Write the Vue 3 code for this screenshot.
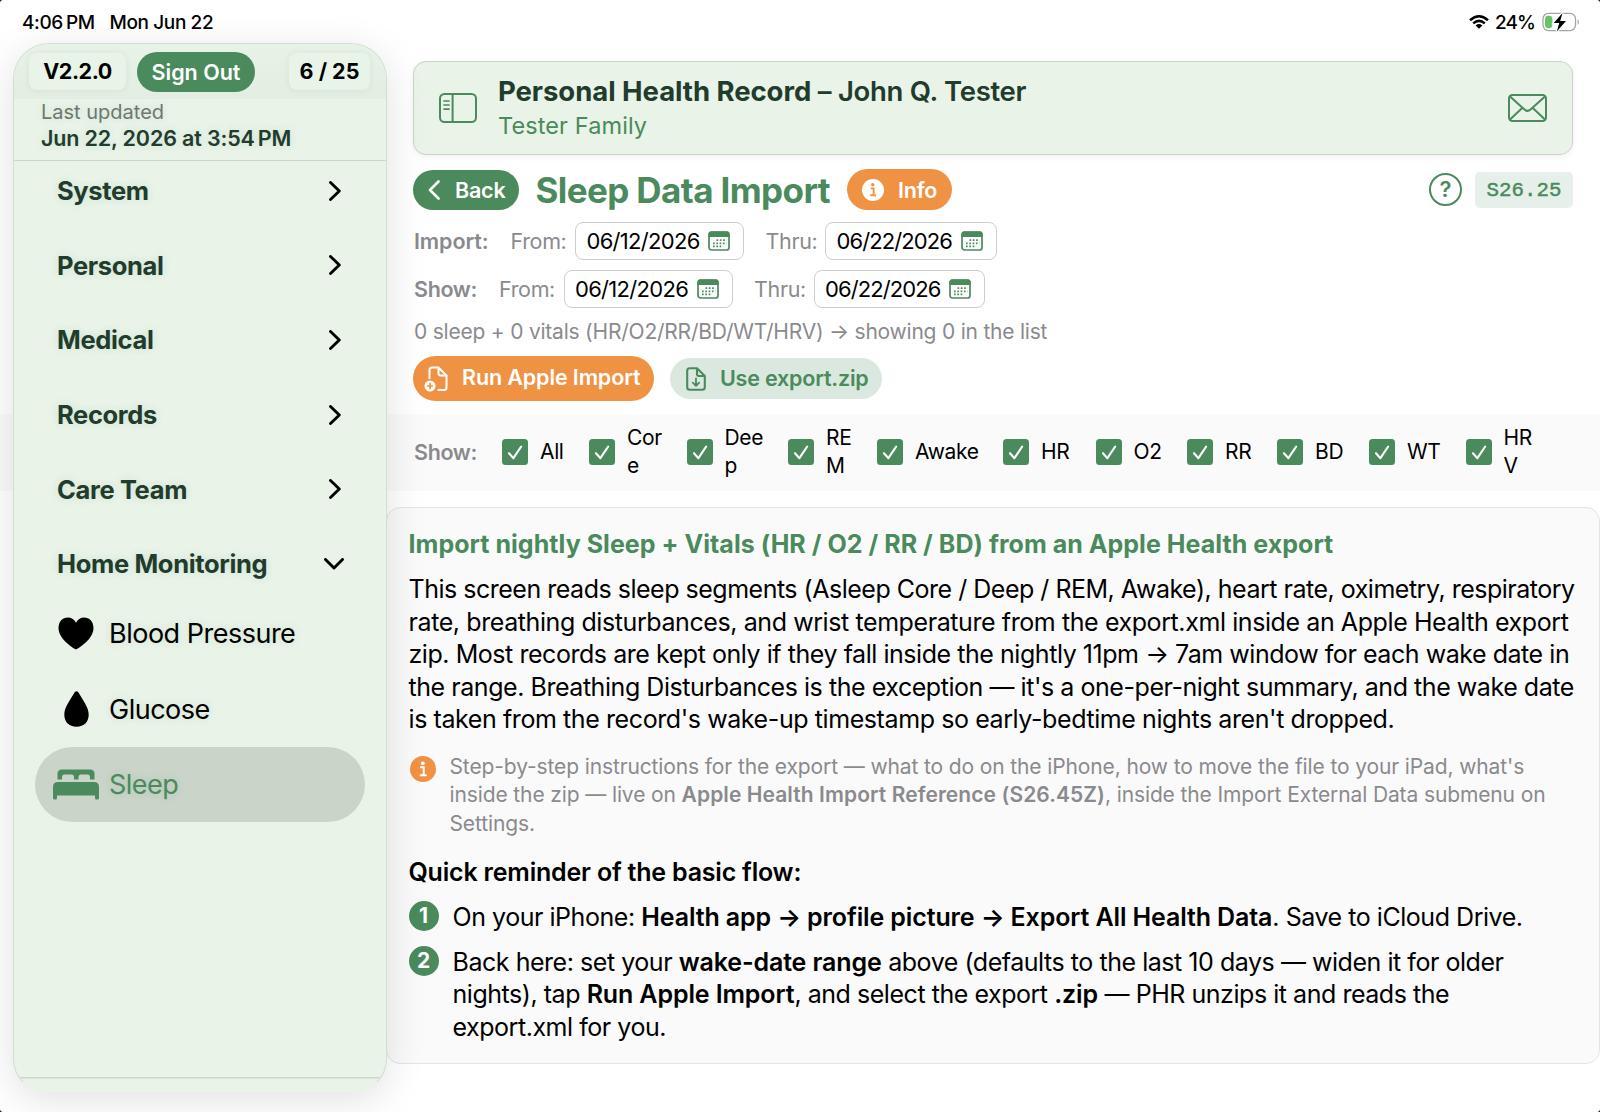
<template>
  <div class="page">
    <header class="statusbar">
      <div class="clock"><span>4:06<i class="thin"></i>PM</span><span>Mon Jun 22</span></div>
      <div class="power">
        <svg class="wifi" viewBox="0 0 20 14">
          <path d="M1 5.2Q10-2.6 19 5.2M4.2 8.4Q10 3.3 15.8 8.4" fill="none" stroke="#000" stroke-width="2.5" />
          <path d="M6.6 10.4Q10 7.7 13.4 10.4L10 13.8Z" />
        </svg>
        <span class="percent">24%</span>
        <svg class="battery" viewBox="0 0 38 20">
          <rect x="1" y="1.4" width="32.5" height="17.2" rx="5.5" fill="none" stroke="#a4a4a6" stroke-width="1.3" />
          <path d="M35.6 7q2.8 3 0 6z" fill="#a4a4a6" />
          <rect x="3" y="3.8" width="7.4" height="12.4" rx="3.4" fill="#65c466" />
          <path d="M20.5 1L11.8 11h5.4l-2.4 8.4L24 9h-5.8z" stroke="#fff" stroke-width="2.4" />
          <path d="M20.5 1L11.8 11h5.4l-2.4 8.4L24 9h-5.8z" />
        </svg>
      </div>
    </header>

    <div class="body">
      <aside class="sidebar">
        <div class="topline">
          <span class="chip version">V2.2.0</span>
          <button class="signout">Sign Out</button>
          <span class="chip count">6 / 25</span>
        </div>
        <div class="updated">
          <div class="label">Last updated</div>
          <div class="date">Jun 22, 2026 at 3:54<i class="thin"></i>PM</div>
        </div>
        <nav class="menu">
          <div v-for="item in menu" :key="item" class="group">
            <span>{{ item }}</span>
            <svg v-if="item === open" class="down" viewBox="0 0 20 12"><path d="M1.5 1.5L10 10l8.5-8.5" /></svg>
            <svg v-else class="right" viewBox="0 0 12 20"><path d="M1.5 1.5L10.3 10l-8.8 8.5" /></svg>
          </div>
          <div class="sub">
            <span class="icon">
              <svg width="36" height="33" viewBox="0 0 36 33"><path d="M18 32.5C14 30.5 .5 21.500 .5 11 .5 4.500 4.800 .5 9.800 .5 13.500 .5 16.500 2.500 18 5.800 19.500 2.500 22.500 .5 26.200 .5 31.200 .5 35.500 4.500 35.500 11 35.500 21.500 22 30.500 18 32.500Z" /></svg>
            </span>
            <span>Blood Pressure</span>
          </div>
          <div class="sub">
            <span class="icon">
              <svg width="25" height="36" viewBox="0 0 25 36"><path d="M12.5 .3C13.5 .3 14.2 1 14.8 2 18 8 24.7 16 24.7 23.5 24.7 31 20 35.7 12.5 35.7S.3 31 .3 23.5C.3 16 7 8 10.2 2 10.8 1 11.5 .3 12.5 .3Z" /></svg>
            </span>
            <span>Glucose</span>
          </div>
          <div class="sub active">
            <span class="icon">
              <svg width="46" height="31" viewBox="0 0 46 31">
                <path d="M4.5 10.5V5Q4.5 .5 9 .5H37Q41.5 .5 41.5 5V10.5H37V8Q37 5.5 34.5 5.5H28Q25.5 5.5 25.5 8V10.5H21V8Q21 5.5 18.5 5.5H11.5Q9 5.5 9 8V10.5Z" />
                <path d="M0 18Q0 13 5 13H41Q46 13 46 18V29Q46 30.5 44.5 30.5H43.5Q42 30.5 42 29V26.5H4V29Q4 30.5 2.5 30.5H1.5Q0 30.5 0 29Z" />
              </svg>
            </span>
            <span>Sleep</span>
          </div>
        </nav>
      </aside>

      <main class="main">
        <section class="record">
          <svg width="38" height="30" viewBox="0 0 38 30" class="line">
            <rect x="1" y="1" width="36" height="28" rx="4.5" />
            <path d="M13.6 1V29" />
            <path d="M5 8h5M5 12h5M5 16.2h5" stroke-width="1.7" />
          </svg>
          <div class="who">
            <div class="name"><b>Personal Health Record</b> <span>– John Q. Tester</span></div>
            <div class="family">Tester Family</div>
          </div>
          <svg width="39" height="28" viewBox="0 0 39 28" class="line">
            <rect x="1" y="1" width="37" height="26" rx="3.5" />
            <path d="M2 2.500L16.500 15.500Q19.500 18.200 22.500 15.500L37 2.500M2 25.500L14.500 13.800M37 25.500L24.500 13.800" />
          </svg>
        </section>

        <div class="titlebar">
          <button class="pill back">
            <svg width="12" height="20" viewBox="0 0 12 20"><path d="M10.5 1.5L2 10l8.5 8.5" fill="none" stroke="#fff" stroke-width="2.6" stroke-linecap="round" stroke-linejoin="round" /></svg>
            Back
          </button>
          <h1>Sleep Data Import</h1>
          <button class="pill info">
            <svg width="22" height="22" viewBox="0 0 22 22">
              <circle cx="11" cy="11" r="11" fill="#fff" />
              <circle cx="10.8" cy="5.8" r="1.7" fill="#ef9244" />
              <path d="M8.6 9.4H11.6V16M8.2 16.3H14" fill="none" stroke="#ef9244" stroke-width="1.9" />
            </svg>
            Info
          </button>
          <span class="help">?</span>
          <span class="code">S26.25</span>
        </div>

        <div v-for="row in ranges" :key="row.label" class="range">
          <b :class="row.label.toLowerCase()">{{ row.label }}:</b>
          <span class="from">From:</span>
          <div class="datebox">
            <span>{{ row.from }}</span>
            <svg class="cal" viewBox="0 0 22 20"><rect x="1" y="1" width="20" height="18" rx="2.5" fill="#fff" stroke="#4a8a5c" stroke-width="1.7" /><path d="M.5 6V3Q.5 .5 3 .5H19Q21.5 .5 21.5 3V6Z" fill="#4a8a5c" /><path d="M8.500 9.200H18.500M5 12.300H18.500M5 15.400H15" stroke="#4a8a5c" stroke-width="1.7" stroke-dasharray="1.7 1.6" /></svg>
          </div>
          <span class="thru">Thru:</span>
          <div class="datebox wide">
            <span>{{ row.thru }}</span>
            <svg class="cal" viewBox="0 0 22 20"><rect x="1" y="1" width="20" height="18" rx="2.5" fill="#fff" stroke="#4a8a5c" stroke-width="1.7" /><path d="M.5 6V3Q.5 .5 3 .5H19Q21.5 .5 21.5 3V6Z" fill="#4a8a5c" /><path d="M8.500 9.200H18.500M5 12.300H18.500M5 15.400H15" stroke="#4a8a5c" stroke-width="1.7" stroke-dasharray="1.7 1.6" /></svg>
          </div>
        </div>

        <div class="summary">0 sleep + 0 vitals (HR/O2/RR/BD/WT/HRV) → showing 0 in the list</div>

        <div class="actions">
          <button class="pill run">
            <svg width="25" height="26" viewBox="0 0 25 26" fill="none" stroke="#fff" stroke-width="2" stroke-linejoin="round">
              <path d="M5.5 13V4Q5.500 1.500 8 1.500H14.500L22.500 9.500V21.500Q22.500 24 20 24H13.500M14.500 1.500V7.500Q14.500 9.500 16.500 9.500H22.500" />
              <circle cx="6" cy="20" r="5.500" fill="#fff" stroke="none" />
              <path d="M6 16.800V23.200M2.800 20H9.200" stroke="#ef9244" stroke-width="1.7" />
            </svg>
            <span>Run Apple Import</span>
          </button>
          <button class="pill use">
            <svg width="20" height="24" viewBox="0 0 20 24" class="doc">
              <path d="M1.2 3.7Q1.2 1.2 3.7 1.2H11L18.8 9V20.3Q18.8 22.8 16.3 22.8H3.7Q1.2 22.8 1.2 20.3ZM11 1.2V7Q11 9 13 9H18.8" />
              <path d="M10 11.5V18.5M6.8 15.6L10 18.8L13.2 15.6" stroke-width="1.8" />
            </svg>
            <span>Use export.zip</span>
          </button>
        </div>

        <section class="filters">
          <b>Show:</b>
          <label v-for="f in filters" :key="f.lines.join('')" :style="{ width: f.width + 'px' }">
            <svg width="26" height="26" viewBox="0 0 26 26"><rect width="26" height="26" rx="3.5" fill="#4a8a5c" /><path d="M7 14.2L11.4 19.2L19.2 7.5" fill="none" stroke="#fff" stroke-width="2.1" stroke-linecap="round" stroke-linejoin="round" /></svg>
            <span><template v-for="(line, i) in f.lines" :key="line"><br v-if="i">{{ line }}</template></span>
          </label>
        </section>

        <section class="panel">
          <h2>Import nightly Sleep + Vitals (HR / O2 / RR / BD) from an Apple Health export</h2>
          <p class="text">
            <span class="tight">This screen reads sleep segments (Asleep Core / Deep / REM, Awake), heart rate, oximetry, respiratory</span><br>
            <span class="loose">rate, breathing disturbances, and wrist temperature from the export.xml inside an Apple Health export</span><br>
            zip. Most records are kept only if they fall inside the nightly 11pm → 7am window for each wake date in<br>
            the range. Breathing Disturbances is the exception — it's a one-per-night summary, and the wake date<br>
            <span class="loose">is taken from the record's wake-up timestamp so early-bedtime nights aren't dropped.</span>
          </p>
          <div class="note">
            <svg width="26" height="26" viewBox="0 0 26 26">
              <circle cx="13" cy="13" r="13" fill="#ef9244" />
              <circle cx="12.8" cy="7.3" r="1.9" fill="#fff" />
              <path d="M10.2 11.3H13.7V18.8M9.8 19.2H16.6" fill="none" stroke="#fff" stroke-width="2" />
            </svg>
            <p>
              Step-by-step instructions for the export — what to do on the iPhone, how to move the file to your iPad, what's<br>
              inside the zip — live on <b>Apple Health Import Reference (S26.45Z)</b>, inside the Import External Data submenu on<br>
              Settings.
            </p>
          </div>
          <h3>Quick reminder of the basic flow:</h3>
          <div class="step">
            <span class="num">1</span>
            <p>On your iPhone: <b>Health app → profile picture → Export All Health Data</b>. Save to iCloud Drive.</p>
          </div>
          <div class="step">
            <span class="num">2</span>
            <p>
              Back here: set your <b>wake-date range</b> above (defaults to the last 10 days — widen it for older<br>
              nights), tap <b>Run Apple Import</b>, and select the export <b>.zip</b> — PHR unzips it and reads the<br>
              export.xml for you.
            </p>
          </div>
        </section>
      </main>
    </div>
  </div>
</template>

<script setup>
import { ref } from 'vue'

const menu = ['System', 'Personal', 'Medical', 'Records', 'Care Team', 'Home Monitoring']
const open = ref('Home Monitoring')

const ranges = ref([
  { label: 'Import', from: '06/12/2026', thru: '06/22/2026' },
  { label: 'Show', from: '06/12/2026', thru: '06/22/2026' }
])

const filters = [
  { lines: ['All'], width: 87 },
  { lines: ['Cor', 'e'], width: 97.5 },
  { lines: ['Dee', 'p'], width: 101.5 },
  { lines: ['RE', 'M'], width: 89 },
  { lines: ['Awake'], width: 126 },
  { lines: ['HR'], width: 92.5 },
  { lines: ['O2'], width: 91.5 },
  { lines: ['RR'], width: 90 },
  { lines: ['BD'], width: 92 },
  { lines: ['WT'], width: 96.5 },
  { lines: ['HR', 'V'], width: 80 }
]
</script>

<style>
body {
  background: #000;
}
</style>

<style scoped>
.page {
  width: 1600px;
  height: 1112px;
  overflow: hidden;
  border-radius: 3px;
  background: #fff;
  color: #000;
  font-family: Inter, "Liberation Sans", sans-serif;
  white-space: nowrap;
}

h1, h2, h3, p {
  margin: 0;
}

button {
  border: 0;
  font-family: inherit;
  white-space: nowrap;
}

b {
  font-weight: 600;
}

svg {
  display: block;
  flex: none;
}

.thin {
  display: inline-block;
  width: 3px;
}

/* status bar */
.statusbar {
  display: flex;
  justify-content: space-between;
  height: 43px;
  box-sizing: border-box;
  padding: 1px 20px 0 22px;
  font-size: 19px;
  font-weight: 500;
  line-height: 43px;
}

.clock {
  display: flex;
  gap: 15px;
  letter-spacing: -0.4px;
}

.power {
  display: flex;
  align-items: center;
}

.wifi {
  width: 20px;
  height: 14px;
}

.percent {
  width: 47px;
  margin-left: 6px;
  letter-spacing: -0.9px;
}

.battery {
  width: 38px;
  height: 20px;
}

.body {
  display: flex;
}

/* sidebar */
.sidebar {
  position: relative;
  z-index: 1;
  flex: none;
  width: 374px;
  height: 1049px;
  margin-left: 13px;
  box-sizing: border-box;
  border: 1px solid #d3ddd3;
  border-bottom-color: transparent;
  border-radius: 36px 36px 33px 33px;
  background: linear-gradient(#cbd6cc, #cbd6cc) 0 1033px / 100% 1.5px no-repeat, #e9f3e8;
  box-shadow: 0 8px 40px rgba(0, 0, 0, 0.12);
}

.topline {
  display: flex;
  align-items: center;
  height: 55px;
  box-sizing: border-box;
  padding: 0 16px 0 15px;
  border-radius: 35px 35px 0 0;
  background: linear-gradient(#e8f3e8, #e3eee3);
}

.chip {
  height: 37px;
  box-sizing: border-box;
  border-radius: 8px;
  background: #e9f4e9;
  box-shadow: 0 0 7px rgba(0, 40, 10, 0.07);
  font-size: 21.5px;
  font-weight: 700;
  line-height: 37px;
  text-align: center;
}

.version {
  width: 97px;
  letter-spacing: -0.5px;
}

.signout {
  width: 118px;
  height: 40px;
  margin-left: 11px;
  padding: 0;
  border-radius: 20px;
  background: #4a8a5c;
  color: #fff;
  font-size: 21.5px;
  font-weight: 600;
}

.count {
  width: 81px;
  margin-left: auto;
}

.updated {
  height: 62px;
  box-sizing: border-box;
  padding-left: 27px;
  border-bottom: 1px solid #c9d6ca;
  color: #213b2c;
  line-height: 26px;
  text-shadow: 0 0 8px rgba(30, 110, 60, 0.13);
}

.updated .label {
  color: #6c786f;
  font-size: 20px;
}

.updated .date {
  font-size: 21.5px;
  font-weight: 600;
  letter-spacing: -0.15px;
}

.menu {
  margin-top: -7.5px;
  text-shadow: 0 0 8px rgba(30, 110, 60, 0.13);
}

.group {
  display: flex;
  align-items: center;
  justify-content: space-between;
  height: 74.6px;
  padding: 0 45px 0 43px;
  color: #213b2c;
  font-size: 25.5px;
  font-weight: 700;
  letter-spacing: -0.35px;
}

.group svg {
  fill: none;
  stroke: #000;
  stroke-width: 2.9;
  stroke-linecap: round;
  stroke-linejoin: round;
}

.right {
  width: 12px;
  height: 20px;
}

.down {
  width: 20px;
  height: 12px;
  margin-right: -3px;
}

.sub {
  display: flex;
  align-items: center;
  height: 76px;
  margin: 0 21px;
  font-size: 27px;
  letter-spacing: -0.5px;
}

.group + .sub {
  margin-top: -6px;
}

.sub .icon {
  display: flex;
  justify-content: center;
  width: 46px;
  margin: 0 10px 0 18px;
}

.active {
  height: 75px;
  border-radius: 37.5px;
  background: #cad4c9;
  color: #4a8a5c;
}

.active svg {
  fill: #4a8a5c;
}

/* main column */
.main {
  width: 1213px;
  padding-top: 18px;
}

.record {
  display: flex;
  align-items: center;
  height: 94px;
  box-sizing: border-box;
  margin: 0 27px 0 26px;
  padding: 0 25px;
  border: 1px solid #c9d3ca;
  border-radius: 13px;
  background: #e9f3e8;
  box-shadow: 0 2px 6px rgba(0, 0, 0, 0.06);
}

.line {
  fill: none;
  stroke: #4a8a5c;
  stroke-width: 2;
  stroke-linecap: round;
}

.who {
  flex: 1;
  padding-left: 21px;
}

.name {
  color: #213b2c;
  font-size: 27.5px;
  font-weight: 600;
  line-height: 35px;
  letter-spacing: -0.3px;
}

.name b {
  font-weight: 700;
  letter-spacing: -0.05px;
}

.family {
  color: #4a8a5c;
  font-size: 23.5px;
  line-height: 33px;
  letter-spacing: 0.1px;
}

.titlebar {
  display: flex;
  align-items: center;
  height: 41px;
  margin: 14px 27px 12px 26px;
}

.pill {
  display: flex;
  align-items: center;
  height: 40px;
  box-sizing: border-box;
  padding: 0;
  border-radius: 21px;
  color: #fff;
  font-size: 21.5px;
  font-weight: 600;
  letter-spacing: -0.2px;
}

.back {
  gap: 15px;
  width: 106px;
  padding-left: 15px;
  background: #4a8a5c;
}

h1 {
  width: 311px;
  padding-left: 16.5px;
  box-sizing: border-box;
  color: #4a8a5c;
  font-size: 35px;
  font-weight: 700;
  letter-spacing: -0.6px;
}

.info {
  gap: 14px;
  width: 105px;
  height: 41px;
  margin-left: 17px;
  padding-left: 15px;
  background: #ef9244;
}

.help {
  width: 33px;
  height: 33px;
  box-sizing: border-box;
  margin-left: auto;
  border: 2.3px solid #4a8a5c;
  border-radius: 50%;
  color: #4a8a5c;
  font-size: 22px;
  font-weight: 600;
  line-height: 29px;
  text-align: center;
}

.code {
  width: 98px;
  height: 36px;
  margin-left: 13px;
  border-radius: 5px;
  background: #e6efe9;
  color: #4a8a5c;
  font-family: "Liberation Mono", monospace;
  font-size: 20.8px;
  line-height: 37px;
  text-align: center;
  -webkit-text-stroke: 0.45px #4a8a5c;
}

.range {
  display: flex;
  align-items: center;
  height: 38px;
  margin: 0 27px 10px;
  color: #8a8a8e;
  font-size: 21.5px;
  letter-spacing: -0.35px;
}

.range .import {
  width: 96.5px;
  letter-spacing: -0.1px;
}

.range .show {
  width: 85px;
}

.from {
  width: 64.5px;
}

.thru {
  width: 59.5px;
  margin-left: 21.5px;
}

.datebox {
  display: flex;
  align-items: center;
  justify-content: space-between;
  width: 169px;
  height: 38px;
  box-sizing: border-box;
  padding: 0 13px 0 10.5px;
  border: 1.5px solid #cdcdd0;
  border-radius: 8px;
  background: #fff;
  color: #000;
  font-size: 22px;
  letter-spacing: -0.7px;
}

.datebox.wide {
  width: 171.5px;
  letter-spacing: -0.9px;
}

.cal {
  width: 22px;
  height: 20px;
}

.summary {
  height: 28px;
  margin: 0 27px 10px;
  color: #8a8a8e;
  font-size: 21px;
  line-height: 28px;
  letter-spacing: -0.22px;
}

.actions {
  display: flex;
  align-items: center;
  gap: 16px;
  height: 45px;
  margin: 0 27px 13px 26px;
}

.run {
  gap: 13px;
  width: 241px;
  height: 45px;
  padding-left: 11px;
  border-radius: 22.5px;
  background: #ef9244;
  letter-spacing: -0.12px;
}

.run span {
  padding-bottom: 4px;
}

.use {
  gap: 14px;
  width: 212px;
  height: 41px;
  padding-left: 16px;
  background: #dbe8df;
  color: #4a8a5c;
}

.use span {
  padding-bottom: 2px;
}

.doc {
  fill: none;
  stroke: #4a8a5c;
  stroke-width: 2.1;
  stroke-linejoin: round;
  stroke-linecap: round;
}

.filters {
  display: flex;
  align-items: center;
  height: 77px;
  box-sizing: border-box;
  margin-left: -387px;
  padding: 0 0 1px 414px;
  background: #fafafa;
  font-size: 21px;
  letter-spacing: -0.35px;
}

.filters b {
  width: 88px;
  color: #8a8a8e;
  font-size: 21.5px;
}

.filters label {
  display: flex;
  flex: none;
  align-items: center;
  gap: 12px;
  line-height: 28.5px;
}

/* instructions */
.panel {
  height: 557px;
  box-sizing: border-box;
  margin: 16px 0 0 -1px;
  padding: 20px 0 0 21.5px;
  border: 1px solid #e4e4e6;
  border-radius: 14px;
  background: #fafafa;
  font-size: 25px;
  line-height: 32.5px;
}

h2 {
  color: #4a8a5c;
  font-size: 25px;
  font-weight: 700;
  letter-spacing: 0.04px;
}

.text {
  margin-top: 12.5px;
  letter-spacing: -0.45px;
}

.text .tight {
  letter-spacing: -0.49px;
}

.text .loose {
  letter-spacing: -0.41px;
}

.note {
  display: flex;
  gap: 14px;
  margin: 17px 0 17.5px;
  padding-left: 1px;
  color: #8a8a8e;
  font-size: 21px;
  line-height: 28.5px;
  letter-spacing: -0.12px;
}

.note b {
  letter-spacing: 0.08px;
}

.note svg {
  margin-top: 3px;
}

h3 {
  font-size: 25px;
  font-weight: 600;
  letter-spacing: -0.2px;
}

.step {
  display: flex;
  gap: 14px;
  margin-top: 12.5px;
  letter-spacing: -0.46px;
}

.step b {
  letter-spacing: -0.12px;
}

.num {
  flex: none;
  width: 30px;
  height: 30px;
  border-radius: 50%;
  background: #4a8a5c;
  color: #fff;
  font-size: 21px;
  font-weight: 700;
  line-height: 30px;
  text-align: center;
  letter-spacing: 0;
}
</style>
